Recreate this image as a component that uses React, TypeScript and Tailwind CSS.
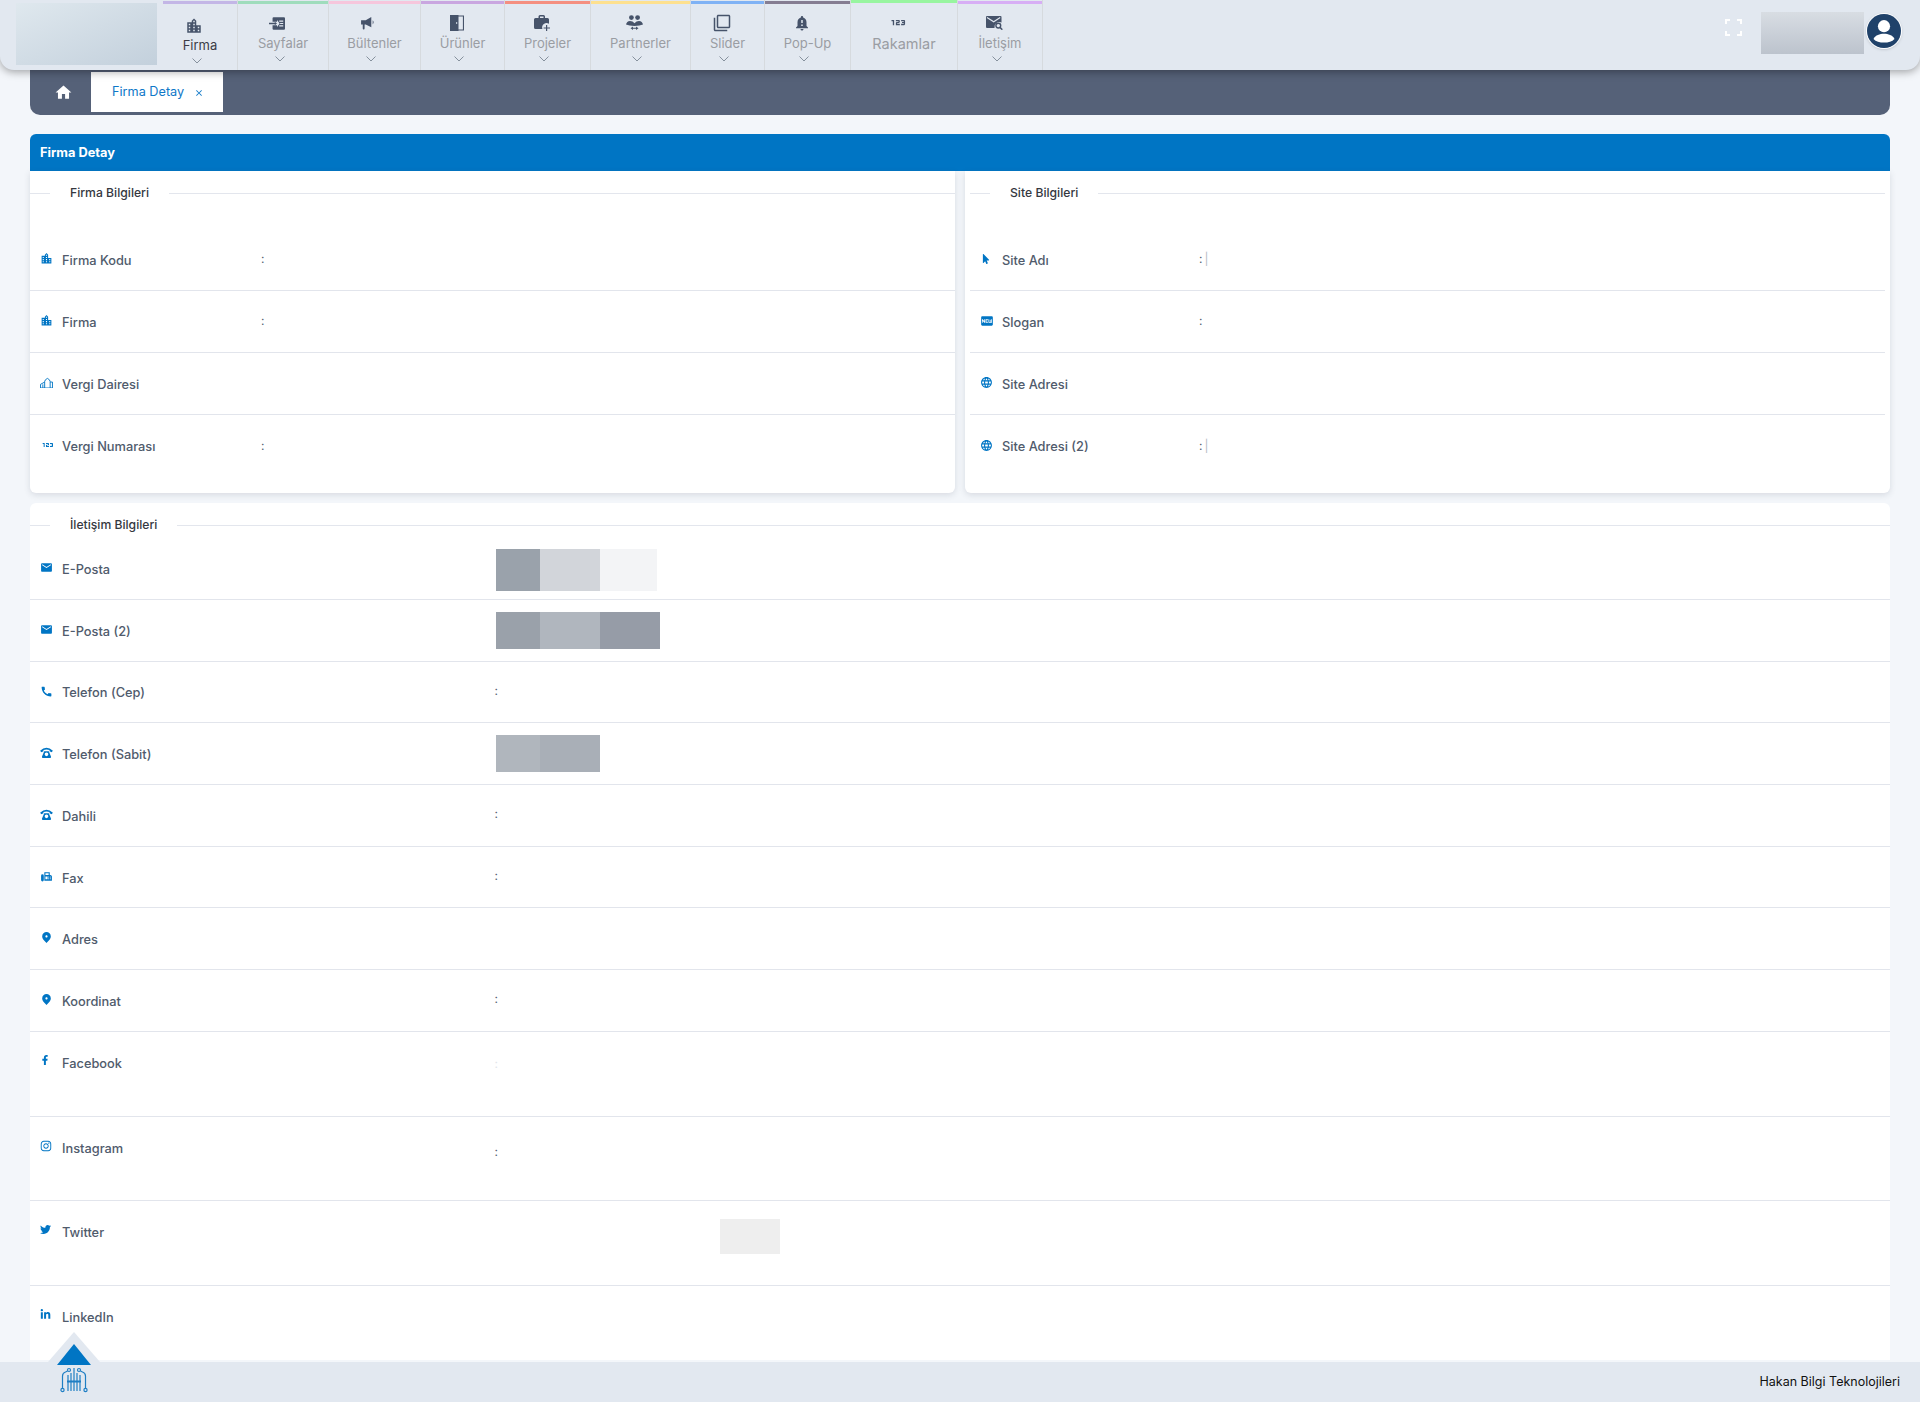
import React from "react";
import {
  MdClose,
  MdEmail,
  MdFilterNone,
  MdFax,
  MdFiberNew,
  MdFmdGood,
  MdHome,
  MdLanguage,
  MdLocationCity,
  MdNotificationImportant,
  Md123,
  MdCall,
} from "react-icons/md";
import { FaFacebookF, FaInstagram, FaLinkedinIn, FaTwitter, FaMousePointer } from "react-icons/fa";

const FONT = "font-['Inter','Noto_Sans',sans-serif]";

function UserIcon() {
  return (
    <svg viewBox="0 0 24 24" className="w-[34px] h-[34px]">
      <circle cx="12" cy="12" r="12" fill="#20426a" />
      <circle cx="12" cy="8.6" r="4.3" fill="#fff" />
      <path d="M4.6 17.6c1.4-2.6 4.4-3.6 7.4-3.6s6 1 7.4 3.6c-1.6 1.8-4.4 2.6-7.4 2.6s-5.8-.8-7.4-2.6z" fill="#fff" />
    </svg>
  );
}

function Logo() {
  return (
    <svg viewBox="0 0 28 26" className="w-[28px] h-[26px]" fill="none" stroke="#1f7fc4" strokeWidth="1.2">
      <path d="M2.5 21V9q0-3 3-4l2-1M25.5 21V9q0-3-3-4l-2-1" />
      <circle cx="9" cy="3" r="1.5" />
      <circle cx="19" cy="3" r="1.5" />
      <circle cx="2.5" cy="23" r="1.6" />
      <circle cx="25.5" cy="23" r="1.6" />
      <path d="M8 8v16M11 6v18M14 1v23M17 6v18M20 8v16" />
      <path d="M7 14.5h14" strokeWidth="2" />
    </svg>
  );
}

function SayfalarIcon() {
  return (
    <svg viewBox="0 0 18 14" className="w-[16px] h-[13px]" fill="currentColor">
      <path d="M4 1.2Q4 0 5.2 0h11.6Q18 0 18 1.2v11.6q0 1.2-1.2 1.2H5.2Q4 14 4 12.8V9h5v1.8L12 7 9 3.2V5H4z" />
      <path d="M0 6.2h6.5V5L9 7l-2.5 2V7.8H0z" />
      <path d="M11.5 3.5h4.500v1.400h-4.500zM12.500 6.300H16v1.400h-3.500zM11.500 9.100h4.500v1.400h-4.500z" fill="#e2e8f0" />
    </svg>
  );
}

function MegaphoneIcon() {
  return (
    <svg viewBox="0 0 16 14" className="w-[15px] h-[13px]" fill="currentColor">
      <path d="M0 3.600h5L11 0v11L5 8H3.800v4.500q0 1-1 1t-1-1V8H0z" />
      <path d="M12.500 3.500q2 2 0 4.600z" />
    </svg>
  );
}

function DoorIcon() {
  return (
    <svg viewBox="0 0 14 16" className="w-[14px] h-[16px]" fill="currentColor">
      <path d="M0 0h8.500v16H0zM6 7.200v1.600h1.200V7.200z" fillRule="evenodd" />
      <path d="M8 1h5.500v14H8" fill="none" stroke="currentColor" strokeWidth="1.200" />
    </svg>
  );
}

function BriefcasePlusIcon() {
  return (
    <svg viewBox="0 0 16 16" className="w-[16px] h-[16px]" fill="#46536a">
      <path d="M4.500 3V1.500Q4.500 0 6 0h3.500Q11 0 11 1.500V3h2.500Q15 3 15 4.500v4.200a4.500 4.500 0 0 0-6.600 5.300H1.500Q0 14 0 12.500v-8Q0 3 1.500 3zM6 1.500V3h3.500V1.500z" />
      <path d="M12 10h1.200v2.400H16v1.200h-2.800V16H12v-2.400H9.600v-1.200H12z" />
    </svg>
  );
}

function PartnersIcon() {
  return (
    <svg viewBox="0 0 17 16" className="w-[17px] h-[16px]" fill="currentColor">
      <circle cx="5.400" cy="2.600" r="2.400" />
      <circle cx="11.600" cy="2.600" r="2.400" />
      <path d="M0 9.600Q.6 6.400 4 6q2.700 0 4.500 2.200Q10.400 6 13 6q3.400.4 4 3.600Q14 11 8.500 11T0 9.600z" />
      <path d="M4.500 13.300 7 11.600v1.200h3v-1.200l2.500 1.700-2.500 1.700v-1.200H7V15z" />
    </svg>
  );
}

function MailSearchIcon() {
  return (
    <svg viewBox="0 0 17 14" className="w-[17px] h-[14px]">
      <path d="M1 0h13.500q1 0 1 1v5.500A5 5 0 0 0 8.500 12H1q-1 0-1-1V1q0-1 1-1z" fill="#46536a" />
      <path d="M1 1.500l6.700 4.300 6.500-4.300" fill="none" stroke="#e2e8f0" strokeWidth="1.100" />
      <circle cx="12.300" cy="9.600" r="2.400" fill="none" stroke="#46536a" strokeWidth="1.400" />
      <path d="M14 11.400l2.300 2.300" stroke="#46536a" strokeWidth="1.500" />
    </svg>
  );
}

function RotaryPhoneIcon() {
  return (
    <svg viewBox="0 0 14 12" className="w-[13px] h-[11px]" fill="currentColor">
      <path d="M0 4.200Q7-2.800 14 4.200L12.600 5.800 10.300 4.700V3.300Q7 2.300 3.700 3.300v1.400L1.400 5.800z" />
      <path fillRule="evenodd" d="M4.500 4.500h5l2.500 6q0 1.500-1 1.500H3q-1 0-1-1.500zM7 6a2 2 0 1 0 0 4 2 2 0 0 0 0-4z" />
    </svg>
  );
}

function TaxOfficeIcon() {
  return (
    <svg viewBox="0 0 14 12" className="w-[13px] h-[11px]" fill="none" stroke="currentColor" strokeWidth="1">
      <path d="M5 12V5q0-2 3-3.500Q11 3 11 5v7M13.500 12V5.500H11M.5 12V8L5 5.500M3 8v4M.5 12h13" />
    </svg>
  );
}

function Chevron() {
  return (
    <svg viewBox="0 0 10 6" className="w-[10px] h-[6px] mt-[3px] mr-[7px]" fill="none" stroke="#6f7a88" strokeWidth="0.8">
      <path d="M.5.500 5 5 9.500.500" />
    </svg>
  );
}

const menu = [
  { label: "Firma", width: "w-[75px]", strip: "bg-[#c3b6e6]", icon: <MdLocationCity size={18} />, active: true },
  { label: "Sayfalar", width: "w-[91px]", strip: "bg-[#9fdcbc]", icon: <SayfalarIcon /> },
  { label: "Bültenler", width: "w-[92px]", strip: "bg-[#f6c6dc]", icon: <MegaphoneIcon /> },
  { label: "Ürünler", width: "w-[84px]", strip: "bg-[#c9a6e0]", icon: <DoorIcon /> },
  { label: "Projeler", width: "w-[86px]", strip: "bg-[#f48f80]", icon: <BriefcasePlusIcon /> },
  { label: "Partnerler", width: "w-[100px]", strip: "bg-[#fde08f]", icon: <PartnersIcon /> },
  { label: "Slider", width: "w-[74px]", strip: "bg-[#7fb2f5]", icon: <MdFilterNone size={18} /> },
  { label: "Pop-Up", width: "w-[86px]", strip: "bg-[#857d92]", icon: <MdNotificationImportant size={18} /> },
  { label: "Rakamlar", width: "w-[107px]", strip: "bg-[#98f5a0]", icon: <Md123 size={21} />, flat: true },
  { label: "İletişim", width: "w-[85px]", strip: "bg-[#d7aef5]", icon: <MailSearchIcon /> },
];

function MenuItem({ item }: { item: (typeof menu)[number] }) {
  return (
    <div className={`${item.width} h-full flex flex-col items-center border-r border-[#d6dade] relative ${item.active ? "pt-[16px]" : item.flat ? "pt-[12px]" : "pt-[13px]"}`}>
      <div className={`absolute left-0 right-0 ${item.flat ? "top-0 h-[3px]" : "top-px h-[3px]"} ${item.strip}`} />
      <div className="text-[#46536a] h-[20px] mr-[12px] flex items-center">{item.icon}</div>
      <span className={`${item.flat ? "text-[14.5px] mt-[2px]" : "text-[13px]"} ${item.active ? "text-[#3c3c46] -mt-[1px]" : "text-[#9a9da3]"} leading-[20px] whitespace-nowrap`}>
        {item.label}
      </span>
      {!item.flat && <Chevron />}
    </div>
  );
}

function Legend({ title }: { title: string }) {
  return (
    <div className="flex items-center h-[44px]">
      <div className="w-5 h-px bg-[#e3e6ed]" />
      <span className="px-5 text-[12.2px] font-medium text-[#35383f] whitespace-nowrap">{title}</span>
      <div className="flex-1 h-px bg-[#e3e6ed]" />
    </div>
  );
}

function InfoRow({ icon, label, colon, tick, last, cols }: { icon: React.ReactNode; label: string; colon?: string; tick?: boolean; last?: boolean; cols: string }) {
  return (
    <div className={`h-[62px] flex items-center pl-[10px] ${last ? "" : "border-b border-[#e2e5ec]"}`}>
      <span className="w-[22px] text-[#0075c4] flex items-center -mt-[2px]">{icon}</span>
      <span className={`${cols} mt-[2px] text-[12.8px] font-medium text-[#505b6c] whitespace-nowrap`}>{label}</span>
      <span className="text-[12px] text-[#55606f] -mt-px">
        {colon ?? ":"}
        {tick && <span className="ml-[2px] text-[#b8bcc4]">|</span>}
      </span>
    </div>
  );
}

function ContactRow({ icon, label, h = "h-[61.7px]", top, children }: { icon: React.ReactNode; label: string; h?: string; top?: boolean; children?: React.ReactNode }) {
  return (
    <div className={`${h} flex ${top ? "items-start pt-[20px]" : "items-center"} pl-[10px] border-b border-[#e2e5ec]`}>
      <span className={`w-[22px] text-[#0075c4] flex items-center ${top ? "mt-[3px]" : "-mt-[2px]"}`}>{icon}</span>
      <span className="w-[434px] mt-[2px] text-[12.8px] font-medium text-[#505b6c] whitespace-nowrap">{label}</span>
      {children}
    </div>
  );
}

function Colon() {
  return <span className="text-[12px] text-[#55606f] -mt-[2px] -ml-[1.5px]">:</span>;
}

function Blocks({ items, h, className = "" }: { items: { w: string; c: string }[]; h: string; className?: string }) {
  return (
    <div className={`flex ${h} ${className}`}>
      {items.map((b, i) => (
        <div key={i} className={`${b.w} ${b.c}`} />
      ))}
    </div>
  );
}

export default function App() {
  return (
    <div className={`${FONT} relative h-[1402px] overflow-hidden bg-[#f3f6fa] flex flex-col`}>
      <header className="relative z-10 h-[70px] shrink-0 bg-[#e2e8f0] rounded-b-[14px] shadow-[0_2px_8px_rgba(0,0,0,0.35)] flex pl-[16px] pr-[18px]">
        <div className="w-[141px] h-[62px] mt-[3px] mr-[6px] bg-gradient-to-br from-[#dfe8ee] to-[#c3d0dc]" />
        <nav className="flex h-full">
          {menu.map((m) => (
            <MenuItem key={m.label} item={m} />
          ))}
        </nav>
        <div className="ml-auto flex items-start">
          <div className="w-[17px] h-[17px] mt-[19px] mr-[19px] relative">
            <div className="absolute inset-0 border-2 border-white" />
            <div className="absolute top-[5px] bottom-[5px] -left-px -right-px bg-[#e2e8f0]" />
            <div className="absolute left-[5px] right-[5px] -top-px -bottom-px bg-[#e2e8f0]" />
          </div>
          <div className="w-[103px] h-[42px] mt-[12px] mr-[2px] bg-gradient-to-b from-[#d8dde3] to-[#bcc3cd]" />
          <div className="mt-[13px] rounded-full border border-white shadow-sm">
            <UserIcon />
          </div>
        </div>
      </header>

      <main className="flex-1 min-h-0 px-[30px] pb-[2px] flex flex-col">
        <div className="h-[45px] shrink-0 bg-[#556178] rounded-b-[10px] flex pt-[2px]">
          <div className="w-[61px] pl-[5px] flex items-center justify-center h-[40px] text-white">
            <MdHome size={19} />
          </div>
          <div className="w-[132px] h-[40px] bg-white flex items-center pl-[21px] text-[12.7px] text-[#0f78c8] whitespace-nowrap">
            Firma Detay
            <MdClose size={10} className="ml-[10px] mt-px" />
          </div>
        </div>

        <div className="mt-[19px] h-[37px] shrink-0 bg-[#0075c4] rounded-t-[6px] flex items-center pl-[10px] text-[12.8px] font-bold text-white">
          Firma Detay
        </div>

        <div className="grid grid-cols-2 gap-[10px] h-[322px] shrink-0">
          <section className="bg-white rounded-b-[6px] shadow-[0_2px_6px_rgba(60,70,90,0.15)]">
            <Legend title="Firma Bilgileri" />
            <div className="mt-[14px]">
              <InfoRow cols="w-[199px]" icon={<MdLocationCity size={13} />} label="Firma Kodu" />
              <InfoRow cols="w-[199px]" icon={<MdLocationCity size={13} />} label="Firma" />
              <InfoRow cols="w-[199px]" icon={<TaxOfficeIcon />} label="Vergi Dairesi" colon=" " />
              <InfoRow cols="w-[199px]" icon={<Md123 size={16} />} label="Vergi Numarası" last />
            </div>
          </section>
          <section className="bg-white rounded-b-[6px] shadow-[0_2px_6px_rgba(60,70,90,0.15)] px-[5px]">
            <Legend title="Site Bilgileri" />
            <div className="mt-[14px]">
              <InfoRow cols="w-[197px]" icon={<FaMousePointer size={10} className="ml-px" />} label="Site Adı" tick />
              <InfoRow cols="w-[197px]" icon={<MdFiberNew size={14} />} label="Slogan" />
              <InfoRow cols="w-[197px]" icon={<MdLanguage size={13} />} label="Site Adresi" colon=" " />
              <InfoRow cols="w-[197px]" icon={<MdLanguage size={13} />} label="Site Adresi (2)" tick last />
            </div>
          </section>
        </div>

        <section className="mt-[10px] flex-1 min-h-0 overflow-hidden bg-white rounded-t-[6px]">
          <Legend title="İletişim Bilgileri" />
          <div className="-mt-[9px]">
            <ContactRow icon={<MdEmail size={13} />} label="E-Posta" h="h-[62px]">
              <Blocks
                h="h-[42px]"
                className="mt-[3px]"
                items={[
                  { w: "w-[44px]", c: "bg-[#9aa2ab]" },
                  { w: "w-[60px]", c: "bg-[#d2d5da]" },
                  { w: "w-[57px]", c: "bg-[#f3f4f6]" },
                ]}
              />
            </ContactRow>
            <ContactRow icon={<MdEmail size={13} />} label="E-Posta (2)">
              <Blocks
                h="h-[37px]"
                items={[
                  { w: "w-[44px]", c: "bg-[#9aa1aa]" },
                  { w: "w-[60px]", c: "bg-[#b0b6be]" },
                  { w: "w-[60px]", c: "bg-[#969ca7]" },
                ]}
              />
            </ContactRow>
            <ContactRow icon={<MdCall size={13} />} label="Telefon (Cep)">
              <Colon />
            </ContactRow>
            <ContactRow icon={<RotaryPhoneIcon />} label="Telefon (Sabit)">
              <Blocks
                h="h-[37px]"
                items={[
                  { w: "w-[44px]", c: "bg-[#b0b6bd]" },
                  { w: "w-[60px]", c: "bg-[#a9afb7]" },
                ]}
              />
            </ContactRow>
            <ContactRow icon={<RotaryPhoneIcon />} label="Dahili">
              <Colon />
            </ContactRow>
            <ContactRow icon={<MdFax size={13} />} label="Fax">
              <Colon />
            </ContactRow>
            <ContactRow icon={<MdFmdGood size={13} />} label="Adres" />
            <ContactRow icon={<MdFmdGood size={13} />} label="Koordinat">
              <Colon />
            </ContactRow>
            <ContactRow icon={<FaFacebookF size={10} />} label="Facebook" h="h-[85px]" top>
              <span className="text-[12px] text-[#e2e5ea] mt-[3px] -ml-[1.5px]">:</span>
            </ContactRow>
            <ContactRow icon={<FaInstagram size={12} />} label="Instagram" h="h-[84px]" top>
              <span className="text-[12px] text-[#55606f] mt-[6px] -ml-[1.5px]">:</span>
            </ContactRow>
            <ContactRow icon={<FaTwitter size={11} />} label="Twitter" h="h-[85px]" top>
              <div className="ml-[224px] -mt-[2px] w-[60px] h-[35px] bg-[#eeeeee]" />
            </ContactRow>
            <div className="h-[76px] flex items-start pt-[20px] pl-[10px]">
              <span className="w-[22px] text-[#0075c4] mt-[3px]"><FaLinkedinIn size={11} /></span>
              <span className="mt-[2px] text-[12.8px] font-medium text-[#505b6c]">LinkedIn</span>
            </div>
          </div>
        </section>
      </main>

      <footer className="relative h-[40px] shrink-0 bg-[#e2e8f0] flex items-center justify-end pr-[20px] text-[12.5px] text-[#111]">
        <div className="absolute left-[60px] top-[5px]">
          <Logo />
        </div>
        Hakan Bilgi Teknolojileri
      </footer>

      <div className="absolute left-[48px] top-[1332px] w-0 h-0 border-l-[26px] border-r-[26px] border-b-[30px] border-l-transparent border-r-transparent border-b-[#e2e8f0]" />
      <div className="absolute left-[57px] top-[1344px] w-0 h-0 border-l-[17px] border-r-[17px] border-b-[21px] border-l-transparent border-r-transparent border-b-[#0075c4]" />
    </div>
  );
}
